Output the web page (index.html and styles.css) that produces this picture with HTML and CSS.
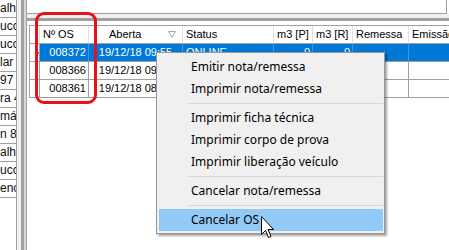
FILE: index.html
```html
<!DOCTYPE html>
<html>
<head>
<meta charset="utf-8">
<link rel="stylesheet" href="styles.css">
</head>
<body>
<div class="screen">
  <div class="left-list">
    <div class="lrow">alhã</div>
    <div class="lrow">ucco</div>
    <div class="lrow">ucco</div>
    <div class="lrow">lar</div>
    <div class="lrow">97</div>
    <div class="lrow">ra 4</div>
    <div class="lrow">más</div>
    <div class="lrow">n 85</div>
    <div class="lrow">alhã</div>
    <div class="lrow">ucco</div>
    <div class="lrow">eno</div>
  </div>
  <div class="vsplit"><div class="vs-a"></div><div class="vs-b"></div><div class="vs-c"></div><div class="vs-d"></div></div>
  <div class="main">
    <div class="top-panel"></div>
    <div class="hsplit"></div>
    <div class="grid-area">
      <div class="grid">
        <div class="row head">
          <div class="c ind"></div>
          <div class="c os">Nº OS</div>
          <div class="c ab">Aberta<svg class="filter" width="8" height="7" viewBox="0 0 8 7"><path d="M0.5 0.5 H7.5 L4 6.5 Z" fill="none" stroke="#a8a8a8" stroke-width="1"/></svg></div>
          <div class="c st">Status</div>
          <div class="c mp">m3 [P]</div>
          <div class="c mr">m3 [R]</div>
          <div class="c re">Remessa</div>
          <div class="c em">Emissão</div>
        </div>
        <div class="row sel">
          <div class="c ind"><span class="mark"></span></div>
          <div class="c os num">008372</div>
          <div class="c ab ctr">19/12/18 09:55</div>
          <div class="c st">ONLINE</div>
          <div class="c mp num">0</div>
          <div class="c mr num">0</div>
          <div class="c re"></div>
          <div class="c em"></div>
        </div>
        <div class="row">
          <div class="c ind"></div>
          <div class="c os num">008366</div>
          <div class="c ab ctr">19/12/18 09:40</div>
          <div class="c st"></div>
          <div class="c mp"></div>
          <div class="c mr"></div>
          <div class="c re"></div>
          <div class="c em"></div>
        </div>
        <div class="row">
          <div class="c ind"></div>
          <div class="c os num">008361</div>
          <div class="c ab ctr">19/12/18 08:30</div>
          <div class="c st"></div>
          <div class="c mp"></div>
          <div class="c mr"></div>
          <div class="c re"></div>
          <div class="c em"></div>
        </div>
      </div>
    </div>
  </div>
</div>

<div class="callout"></div>

<div class="menu">
  <div class="item">Emitir nota/remessa</div>
  <div class="item">Imprimir nota/remessa</div>
  <div class="sep"></div>
  <div class="item">Imprimir ficha técnica</div>
  <div class="item">Imprimir corpo de prova</div>
  <div class="item">Imprimir liberação veículo</div>
  <div class="sep"></div>
  <div class="item">Cancelar nota/remessa</div>
  <div class="sep"></div>
  <div class="item hot">Cancelar OS</div>
</div>

<svg class="cursor" width="14" height="23" viewBox="0 0 14 23">
  <path d="M0.5 0.5 V18.5 L4.5 14.5 L7.5 21.5 L10 20.5 L7 13.5 H12.5 Z" fill="#fff" stroke="#000" stroke-width="1" stroke-linejoin="miter"/>
</svg>
</body>
</html>
```
FILE: styles.css
```css
html, body {
  margin: 0;
  padding: 0;
}
body {
  width: 449px;
  height: 250px;
  overflow: hidden;
  position: relative;
  background: #ffffff;
  font-family: "Liberation Sans", Arial, sans-serif;
  font-size: 11px;
  color: #000;
}
.screen {
  display: flex;
  height: 250px;
}
.left-list {
  flex: 0 0 16px;
  width: 16px;
  border-right: 1px solid #a0a0a0;
  overflow: hidden;
  background: #fff;
}
.lrow {
  height: 17px;
  line-height: 17px;
  border-bottom: 1px solid #a0a0a0;
  white-space: nowrap;
  overflow: hidden;
  font-size: 12px;
  color: #101010;
}
.vsplit {
  flex: 0 0 10px;
  display: flex;
  background: #f0f0f0;
}
.vs-a { width: 4px; background: #f0f0f0; }
.vs-b { width: 3px; background: #a0a0a0; }
.vs-c { width: 2px; background: #d8d8d8; }
.vs-d { width: 1px; background: #a0a0a0; }
.main {
  flex: 1 1 auto;
  min-width: 0;
  overflow: hidden;
  display: flex;
  flex-direction: column;
}
.top-panel {
  height: 13px;
  border-bottom: 1px solid #a0a0a0;
  border-right: 1px solid #a0a0a0;
  margin-right: 2px;
  background: #fff;
}
.hsplit {
  height: 7px;
  background: linear-gradient(#f0f0f0 0 4px, #a0a0a0 4px 7px);
}
.grid-area {
  flex: 1;
  background: #fff;
  padding: 4px 0 0 2px;
}
.grid {
  border-left: 1px solid #a0a0a0;
  border-top: 1px solid #a0a0a0;
}
.row {
  display: grid;
  grid-template-columns: 10px 49px 94px 91px 39px 40px 56px 60px;
  height: 18px;
}
.c {
  box-sizing: border-box;
  border-right: 1px solid #a0a0a0;
  border-bottom: 1px solid #a0a0a0;
  line-height: 17px;
  padding: 0 3px;
  white-space: nowrap;
  overflow: hidden;
}
.head .c {
  border-right-color: #e0e0e0;
  border-bottom-color: #a0a0a0;
  background: #fff;
  padding-left: 3px;
}
.head .ab {
  position: relative;
  padding-left: 20px;
}
.filter {
  position: absolute;
  right: 6px;
  top: 5px;
}
.num { text-align: right; padding-right: 2px; }
.ctr { text-align: center; padding: 0; }
.ind { padding: 0; position: relative; }
.sel .c { background: #0078d7; color: #fff; border-right-color: #3d97e0; border-bottom-color: #a0a0a0; }
.sel .ind { background: #fff; border-right-color: #a0a0a0; }
.mark {
  position: absolute;
  left: 6px;
  top: 6px;
  width: 0;
  height: 0;
  border-top: 3px solid transparent;
  border-bottom: 3px solid transparent;
  border-left: 3px solid #000;
}
.callout {
  position: absolute;
  left: 35px;
  top: 12px;
  width: 56px;
  height: 86px;
  border: 3px solid #e3121c;
  border-radius: 9px;
}
.menu {
  position: absolute;
  left: 156px;
  top: 52px;
  width: 225px;
  padding: 3px 1px 2px 1px;
  background: #f0f0f0;
  border: 1px solid #979797;
  box-shadow: 2px 2px 2px rgba(0,0,0,0.35);
  font-family: "Noto Sans", "Open Sans", sans-serif;
  font-size: 12px;
  color: #000;
}
.item {
  height: 22px;
  line-height: 22px;
  padding-left: 33px;
  white-space: nowrap;
}
.item.hot {
  background: #91c9f7;
  margin-left: 1px;
  padding-left: 32px;
}
.sep {
  height: 7px;
  margin-left: 30px;
  background: linear-gradient(#f0f0f0 0 3px, #d7d7d7 3px 4px, #f0f0f0 4px);
}
.cursor {
  position: absolute;
  left: 261px;
  top: 216px;
}
```
